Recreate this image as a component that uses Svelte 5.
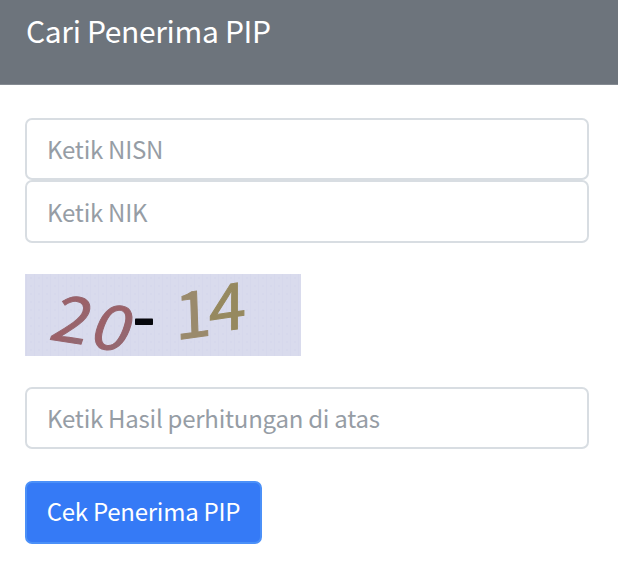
<script>
  let nisn = $state('');
  let nik = $state('');
  let answer = $state('');
</script>

<main>
  <header><h1>Cari Penerima PIP</h1></header>
  <form onsubmit={(e) => e.preventDefault()}>
    <input placeholder="Ketik NISN" aria-label="NISN" bind:value={nisn} />
    <input class="nik" placeholder="Ketik NIK" aria-label="NIK" bind:value={nik} />
    <svg class="captcha" width="276" height="82" viewBox="-1 0 276 82" aria-label="20 - 14">
      <defs>
        <pattern id="grain" width="8" height="8" patternUnits="userSpaceOnUse">
          <path d="M0 0h1v8H0zM4 3h2v2H4z" fill="#d3d6eb" opacity=".5" />
        </pattern>
        <linearGradient id="rose" x1="0" y1="0" x2="1" y2="1">
          <stop offset="0" stop-color="#99636c" />
          <stop offset=".5" stop-color="#9c6168" />
          <stop offset="1" stop-color="#8b707b" />
        </linearGradient>
      </defs>
      <rect x="-1" width="276" height="82" fill="#d9dbed" />
      <rect x="-1" width="276" height="82" fill="url(#grain)" />
      <g class="digits">
        <text fill="url(#rose)" stroke="#96656e" transform="translate(21.5 65) rotate(9) skewX(-9) scale(1.05 1)">2</text>
        <text fill="url(#rose)" stroke="#96656e" transform="translate(60.5 72) rotate(9) skewX(-12) scale(1.08 .97)">0</text>
        <text fill="#9a8a6c" stroke="#9a8a6c" transform="translate(149.5 66) rotate(-8) skewX(-6) scale(1.04 1)">1</text>
        <text fill="#96895f" stroke="#96895f" transform="translate(183 59) rotate(-8) skewX(-8) scale(1.05 1)">4</text>
      </g>
      <rect x="109" y="44.5" width="18" height="6.5" rx=".8" fill="#06070c" />
    </svg>
    <input placeholder="Ketik Hasil perhitungan di atas" aria-label="Hasil perhitungan" bind:value={answer} />
    <button type="submit">Cek Penerima PIP</button>
  </form>
</main>

<style>
  :global(body) { background: #fff; }
  main, input, button {
    font-family: "Noto Sans CJK SC", "Noto Sans", sans-serif;
  }
  header {
    box-sizing: border-box;
    height: 85px;
    padding: 10px 26px 0;
    background: #6d747c;
    border-bottom: 1px solid #858b92;
  }
  h1 {
    margin: 0;
    color: #fff;
    font-size: 30px;
    font-weight: 400;
    line-height: 40px;
    letter-spacing: -.34px;
  }
  form {
    display: flex;
    flex-direction: column;
    align-items: flex-start;
    padding: 33px 29px 0 25px;
  }
  input {
    box-sizing: border-box;
    width: 564px;
    height: 62.4px;
    margin: 0;
    padding: 0 20px 1.5px;
    border: 2px solid #d8dde2;
    border-radius: 7px;
    background: #fff;
    font-size: 24px;
    letter-spacing: -.25px;
    color: #495057;
    outline: none;
  }
  .nik { padding-bottom: 0; }
  input::placeholder { color: #969da5; opacity: 1; }
  .captcha { display: block; margin: 31.2px 0 31px; overflow: visible; }
  .digits text {
    font-family: "Noto Sans CJK SC", sans-serif;
    font-size: 64px;
    stroke-width: 1px;
  }
  button {
    box-sizing: border-box;
    width: 237px;
    height: 63px;
    margin: 31.6px 0 0;
    padding: 0 0 4px;
    border: 2px solid #4b90f8;
    border-radius: 7px;
    background: #357af6;
    color: #fff;
    font-size: 24px;
    letter-spacing: -.25px;
    white-space: nowrap;
  }
</style>
